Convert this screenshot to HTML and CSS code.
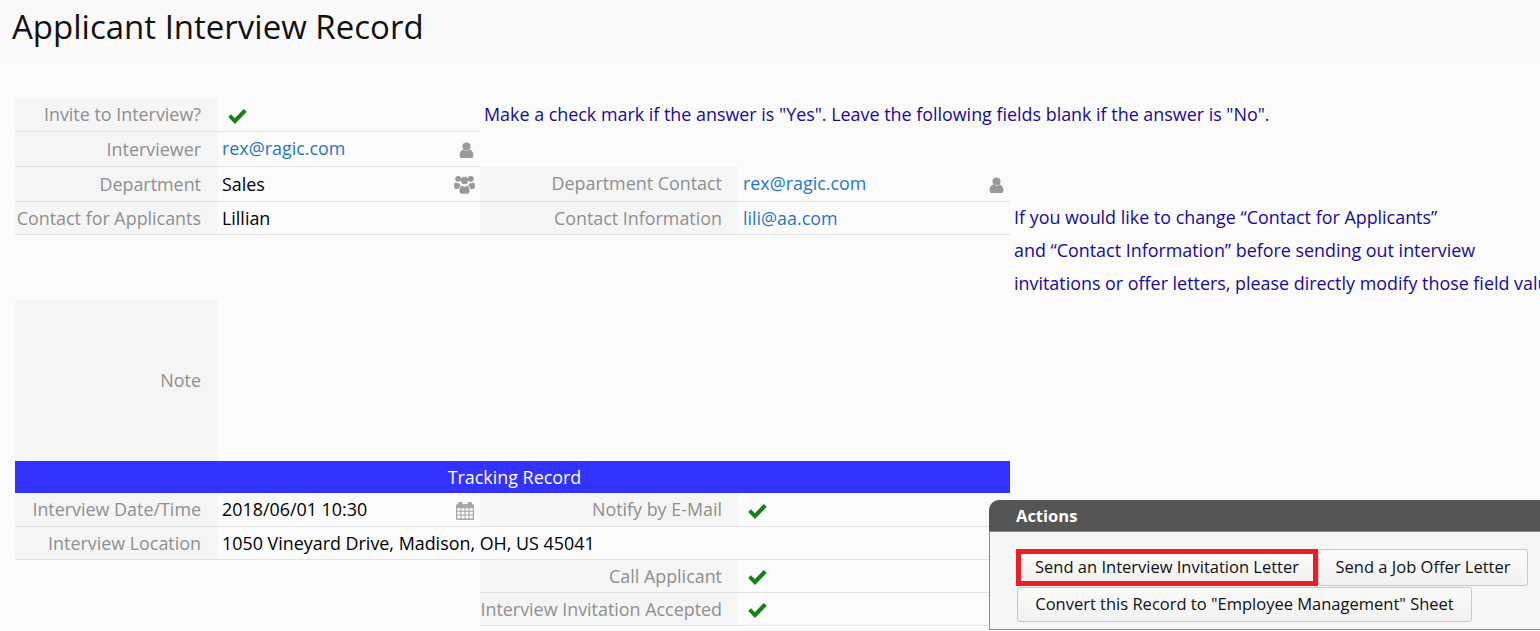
FILE: index.html
```html
<!DOCTYPE html>
<html lang="en">
<head>
<meta charset="utf-8">
<title>Applicant Interview Record</title>
<link rel="stylesheet" href="styles.css">
</head>
<body>
<svg class="defs" width="0" height="0" aria-hidden="true">
  <symbol id="check" viewBox="1.6 1.4 16.8 13.6"><path d="M1.6 8.6 4 6.2 7.6 9.8 15.6 1.4 18.4 4 7.7 15 1.6 8.6Z"/></symbol>
  <symbol id="user" viewBox="0 0 15 16"><circle cx="7.5" cy="4.4" r="4"/><path d="M0.6 13.4C0.6 9.6 2.6 8 4.6 7.6 5.4 8.4 6.4 8.9 7.5 8.9S9.6 8.4 10.4 7.6C12.4 8 14.4 9.6 14.4 13.4 14.4 15 13.4 16 11.9 16H3.1C1.6 16 .6 15 .6 13.4Z"/></symbol>
  <symbol id="group" viewBox="0 0 20 18"><circle cx="4" cy="3.6" r="2.8"/><circle cx="16" cy="3.6" r="2.8"/><circle cx="10" cy="5.2" r="3.5"/><path d="M0 10.5C0 8 1 7 2.3 7 3 7.700 3.900 8 5 7.800 5.400 9 6 9.800 6.700 10.300 5.400 10.900 4.600 12 4.400 13.200H1.800C.7 13.200 0 12.300 0 10.500ZM20 10.500C20 8 19 7 17.700 7 17 7.700 16.100 8 15 7.800 14.600 9 14 9.800 13.300 10.300 14.600 10.900 15.400 12 15.600 13.200H18.200C19.300 13.200 20 12.300 20 10.500ZM5.200 15C5.200 12.300 6.200 10.800 7.700 10.300 8.400 10.900 9.200 11.200 10 11.200S11.600 10.900 12.300 10.300C13.800 10.800 14.800 12.300 14.800 15 14.800 16.800 13.800 17.800 12.500 17.800H7.500C6.200 17.800 5.200 16.800 5.200 15Z"/></symbol>
  <symbol id="calendar" viewBox="0 0 17 17"><path fill-rule="evenodd" d="M3 0h2a1 1 0 0 1 1 1v1h5V1a1 1 0 0 1 1-1h2a1 1 0 0 1 1 1v1h.5A1.500 1.500 0 0 1 17 3.500v12a1.500 1.500 0 0 1-1.500 1.500h-14A1.500 1.500 0 0 1 0 15.500v-12A1.500 1.500 0 0 1 1.500 2H2V1a1 1 0 0 1 1-1ZM1.200 6v2.300h3V6h-3Zm4 0v2.300h2.800V6H5.200Zm3.800 0v2.300h2.800V6H9Zm3.800 0v2.300h3V6h-3ZM1.200 9.300v2.400h3V9.300h-3Zm4 0v2.400h2.800V9.300H5.200Zm3.800 0v2.400h2.800V9.300H9Zm3.800 0v2.400h3V9.300h-3ZM1.200 12.700v3h3v-3h-3Zm4 0v3h2.800v-3H5.200Zm3.800 0v3h2.800v-3H9Zm3.800 0v3h3v-3h-3Z"/></symbol>
</svg>

<header class="page-title"><h1>Applicant Interview Record</h1></header>

<main class="form">
  <div class="label r1 c1 up">Invite to Interview?</div>
  <div class="value r1 c2 check-cell"><svg class="ico-check"><use href="#check"/></svg></div>
  <div class="hint hint-one">Make a check mark if the answer is "Yes". Leave the following fields blank if the answer is "No".</div>

  <div class="label r2 c1">Interviewer</div>
  <div class="value r2 c2"><a class="link up-text">rex@ragic.com</a><svg class="ico-user"><use href="#user"/></svg></div>

  <div class="label r3 c1">Department</div>
  <div class="value r3 c2"><span>Sales</span><svg class="ico-group"><use href="#group"/></svg></div>
  <div class="label r3 c3 up">Department Contact</div>
  <div class="value r3 c4"><a class="link up-text">rex@ragic.com</a><svg class="ico-user"><use href="#user"/></svg></div>

  <div class="label r4 c1">Contact for Applicants</div>
  <div class="value r4 c2"><span>Lillian</span></div>
  <div class="label r4 c3">Contact Information</div>
  <div class="value r4 c4"><a class="link">lili@aa.com</a></div>
  <div class="hint hint-two">If you would like to change “Contact for Applicants”<br>and “Contact Information” before sending out interview<br>invitations or offer letters, please directly modify those field values</div>

  <div class="label note-label up">Note</div>

  <div class="banner">Tracking Record</div>

  <div class="label r7 c1 up">Interview Date/Time</div>
  <div class="value r7 c2"><span class="up-text">2018/06/01 10:30</span><svg class="ico-cal"><use href="#calendar"/></svg></div>
  <div class="label r7 c3 up">Notify by E-Mail</div>
  <div class="value r7 c4 check-cell"><svg class="ico-check"><use href="#check"/></svg></div>

  <div class="label r8 c1">Interview Location</div>
  <div class="value r8 wide">1050 Vineyard Drive, Madison, OH, US 45041</div>

  <div class="label r9 c3">Call Applicant</div>
  <div class="value r9 c4 check-cell"><svg class="ico-check"><use href="#check"/></svg></div>

  <div class="label r10 c3">Interview Invitation Accepted</div>
  <div class="value r10 c4 check-cell"><svg class="ico-check"><use href="#check"/></svg></div>
</main>

<aside class="actions">
  <div class="actions-head">Actions</div>
  <div class="actions-body">
    <button class="btn btn-hl">Send an Interview Invitation Letter</button><button class="btn btn-job">Send a Job Offer Letter</button>
    <button class="btn btn-conv">Convert this Record to "Employee Management" Sheet</button>
  </div>
</aside>
</body>
</html>
```
FILE: styles.css
```css
* { box-sizing: border-box; }
html, body { margin: 0; height: 100%; }
body {
  width: 1540px;
  height: 631px;
  overflow: hidden;
  position: relative;
  background: #fbfbfb;
  font-family: "Open Sans", "Liberation Sans", sans-serif;
  font-size: 17.9px;
  color: #000;
}
.defs { position: absolute; }
.page-title {
  height: 64px;
  background: #f9f9f9;
  padding-left: 12px;
}
.page-title h1 {
  margin: 0;
  font-size: 33px;
  font-weight: 400;
  line-height: 54px;
  color: #111;
}
.form {
  display: grid;
  margin: 34px 0 0 15px;
  grid-template-columns: 203px 262px 258px 272px 1fr;
  grid-template-rows: 34px 35px 35px 33px 65px 161px 32px 34px 33px 33px 33px;
}
.label {
  background: #f5f5f5;
  border-bottom: 1px solid #e2e2e2;
  color: #8f8f8f;
  text-align: right;
  padding-right: 16px;
  display: flex;
  align-items: center;
  justify-content: flex-end;
  white-space: nowrap;
}
.label.c1, .note-label { padding-right: 17px; }
.label.up { padding-bottom: 2px; }
.up-text { position: relative; top: -1px; }
.value {
  border-bottom: 1px solid #e2e2e2;
  display: flex;
  align-items: center;
  justify-content: space-between;
  padding: 0 6px 0 5px;
  white-space: nowrap;
}
.value.c2, .value.wide { padding-left: 4px; }
.value.c2:has(.ico-group) { padding-right: 5px; }
.link { color: #1f78c8; }
.value.check-cell { padding-left: 10px; }
.r1 { grid-row: 1; } .r2 { grid-row: 2; } .r3 { grid-row: 3; } .r4 { grid-row: 4; }
.r7 { grid-row: 8; } .r8 { grid-row: 9; } .r9 { grid-row: 10; } .r10 { grid-row: 11; }
.c1 { grid-column: 1; } .c2 { grid-column: 2; } .c3 { grid-column: 3; } .c4 { grid-column: 4; }
.wide { grid-column: 2 / 5; }
.hint { color: #170a9c; white-space: nowrap; }
.hint-one {
  grid-row: 1;
  grid-column: 3 / 6;
  padding: 0 0 2px 4px;
  display: flex;
  align-items: center;
}
.hint-two {
  grid-row: 4 / 6;
  grid-column: 5;
  margin-top: -1px;
  padding-left: 4px;
  line-height: 33px;
}
.note-label {
  grid-row: 6;
  grid-column: 1;
  border-bottom: 0;
}
.banner {
  grid-row: 7;
  grid-column: 1 / 5;
  background: #3333ff;
  color: #fff;
  text-align: center;
  line-height: 32px;
  padding-left: 4px;
}
.ico-check { width: 19px; height: 15px; fill: #178017; margin-top: 3px; }
.ico-user { width: 15px; height: 16px; fill: #999; margin-top: 1px; }
.ico-group { width: 21px; height: 19px; fill: #999; }
.ico-cal { width: 18px; height: 18px; fill: #aaa6a6; margin-top: 2px; }
.actions {
  position: absolute;
  left: 989px;
  top: 500px;
  width: 551px;
  height: 130px;
  border-radius: 10px 0 0 0;
  overflow: hidden;
}
.actions-head {
  height: 31px;
  background: #555;
  color: #fff;
  font-weight: 700;
  font-size: 16.5px;
  line-height: 32px;
  padding-left: 27px;
}
.actions-body {
  height: 99px;
  background: #f6f6f6;
  border: 1px solid #888;
  border-right: 0;
  padding: 17px 0 0 26px;
  display: flex;
  flex-wrap: wrap;
  align-content: flex-start;
}
.btn {
  height: 37px;
  font-family: inherit;
  font-size: 16.5px;
  color: #111;
  background: linear-gradient(#fbfbfb, #f1f1f1);
  border: 1px solid #c8c8c8;
  border-radius: 3px;
  padding: 0 0 2px;
  white-space: nowrap;
}
.btn-hl {
  width: 302px;
  border: 5px solid #ee1c25;
  border-radius: 0;
}
.btn-job { width: 210px; }
.btn-conv { width: 455px; height: 35px; margin: 1px 0 0 1px; }
```
